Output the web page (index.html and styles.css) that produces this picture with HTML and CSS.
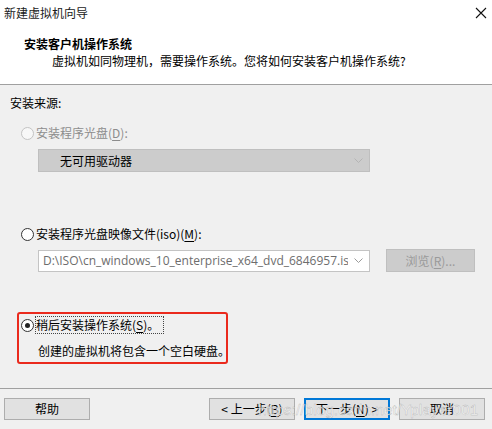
FILE: index.html
```html
<!DOCTYPE html>
<html lang="zh-CN">
<head>
  <meta charset="UTF-8" />
  <title>新建虚拟机向导</title>
  <link rel="stylesheet" href="styles.css">
</head>
<body>
  <div class="wizard">

    <div class="header">
      <div class="titlebar">
        <span class="title">新建虚拟机向导</span>
        <svg class="close" width="12" height="12" viewBox="0 0 12 12">
          <path d="M1 1 L11 11 M11 1 L1 11" stroke="#111" stroke-width="1.1" fill="none"/>
        </svg>
      </div>
      <div class="heading">安装客户机操作系统</div>
      <div class="subheading">虚拟机如同物理机，需要操作系统。您将如何安装客户机操作系统?</div>
    </div>

    <div class="content">
      <div class="section-label">安装来源:</div>

      <label class="option disabled">
        <span class="radio"></span>
        <span>安装程序光盘(<u>D</u>):</span>
      </label>
      <div class="combo combo-disabled">
        <span class="combo-text">无可用驱动器</span>
        <svg class="chevron" width="9" height="5" viewBox="0 0 9 5"><path d="M0.5 0.5 L4.5 4.5 L8.5 0.5" stroke="#b4b4b4" fill="none"/></svg>
      </div>

      <label class="option option-iso">
        <span class="radio"></span>
        <span>安装程序光盘映像文件(iso)(<u>M</u>):</span>
      </label>
      <div class="iso-row">
        <div class="combo combo-path">
          <span class="path-text">D:\ISO\cn_windows_10_enterprise_x64_dvd_6846957.iso</span>
          <svg class="chevron" width="9" height="5" viewBox="0 0 9 5"><path d="M0.5 0.5 L4.5 4.5 L8.5 0.5" stroke="#9a9a9a" fill="none"/></svg>
        </div>
        <div class="btn btn-disabled browse">浏览(<u>R</u>)...</div>
      </div>

      <div class="highlight">
        <label class="option">
          <span class="radio checked"></span>
          <span class="focus-text">稍后安装操作系统(<u>S</u>)。</span>
        </label>
        <div class="note">创建的虚拟机将包含一个空白硬盘。</div>
      </div>
    </div>

    <div class="footer">
      <div class="btn">帮助</div>
      <div class="nav-buttons">
        <div class="btn">&lt; 上一步(<u>B</u>)</div>
        <div class="btn btn-default">下一步(<u>N</u>) &gt;</div>
        <div class="btn">取消</div>
      </div>
      <div class="watermark">https://blog.csdn.net/Yplayer001</div>
    </div>

  </div>
</body>
</html>
```

FILE: styles.css
```css
body {
  margin: 0;
  background: #f0f0f0;
  font-family: "Noto Sans CJK SC", "Noto Sans", sans-serif;
  font-size: 12px;
  line-height: 16px;
  color: #000;
}

.wizard {
  width: 492px;
  height: 429px;
  overflow: hidden;
  position: relative;
}

u {
  text-decoration-thickness: 1px;
  text-underline-offset: 2px;
}

/* Header */
.header {
  background: #fff;
  height: 84px;
  border-bottom: 1px solid #a0a0a0;
}

.titlebar {
  height: 26px;
  display: flex;
  align-items: center;
  justify-content: space-between;
  padding: 0 5px 0 4px;
}

.title {
  color: #1a1a1a;
}

.close {
  margin-top: -1px;
}

.heading {
  font-weight: bold;
  padding-left: 24px;
  margin-top: 10px;
}

.subheading {
  padding-left: 52px;
  margin-top: 1px;
}

/* Content */
.content {
  height: 304px;
  border-bottom: 1px solid #a0a0a0;
  padding: 10px 0 0 10px;
  box-sizing: border-box;
}

.option {
  display: flex;
  align-items: center;
  gap: 2px;
  margin-left: 11px;
  margin-top: 14px;
  white-space: nowrap;
}

.option.disabled {
  color: #8d8d8d;
}

.option-iso {
  margin-top: 54px;
}

.radio {
  width: 13px;
  height: 13px;
  box-sizing: border-box;
  border: 1px solid #333;
  border-radius: 50%;
  background: #fff;
  display: flex;
  align-items: center;
  justify-content: center;
  flex-shrink: 0;
}

.disabled .radio {
  border-color: #c3c3c3;
  background: #f7f7f7;
}

.radio.checked::after {
  content: "";
  width: 5px;
  height: 5px;
  border-radius: 50%;
  background: #222;
}

.combo {
  width: 332px;
  height: 23px;
  box-sizing: border-box;
  margin-left: 28px;
  display: flex;
  align-items: center;
  justify-content: space-between;
  padding-right: 6px;
}

.combo-disabled {
  margin-top: 8px;
  background: #cccccc;
  border: 1px solid #bfbfbf;
}

.combo-text {
  padding-left: 21px;
}

.iso-row {
  display: flex;
  align-items: center;
  margin-top: 7px;
}

.combo-path {
  height: 22px;
  background: #fff;
  border: 1px solid #c4c4c4;
  padding-left: 4px;
}

.path-text {
  color: #6d6d6d;
  font-family: "Open Sans", sans-serif;
  font-size: 12px;
  white-space: nowrap;
  overflow: hidden;
  width: 305px;
}

/* Buttons */
.btn {
  width: 86px;
  height: 22px;
  box-sizing: border-box;
  background: #e1e1e1;
  border: 1px solid #adadad;
  display: flex;
  align-items: center;
  justify-content: center;
  white-space: nowrap;
}

.btn-disabled {
  background: #cccccc;
  border-color: #bfbfbf;
  color: #9a9a9a;
}

.browse {
  width: 89px;
  height: 23px;
  margin-left: 16px;
}

.btn-default {
  border: 2px solid #0078d7;
}

/* Highlighted choice */
.highlight {
  width: 211px;
  box-sizing: border-box;
  margin: 40px 0 0 7px;
  padding: 3px 2px 3px 2px;
  border: 2px solid #ea2a1d;
  border-radius: 3px;
}

.highlight .option {
  margin: 0;
}

.focus-text {
  outline: 1px dotted #444;
  outline-offset: 0;
  padding-right: 4px;
}

.note {
  margin: 10px 0 0 17px;
  white-space: nowrap;
}

/* Footer */
.footer {
  display: flex;
  justify-content: space-between;
  padding: 9px 7px 0 4px;
  position: relative;
}

.nav-buttons {
  display: flex;
  gap: 9px;
}

.watermark {
  position: absolute;
  left: 258px;
  top: 12px;
  font-family: "Liberation Sans", sans-serif;
  font-size: 15.5px;
  line-height: 18px;
  color: rgba(255, 255, 255, 0.75);
  -webkit-text-stroke: 0.4px rgba(140, 140, 140, 0.6);
  white-space: nowrap;
  pointer-events: none;
}
```
